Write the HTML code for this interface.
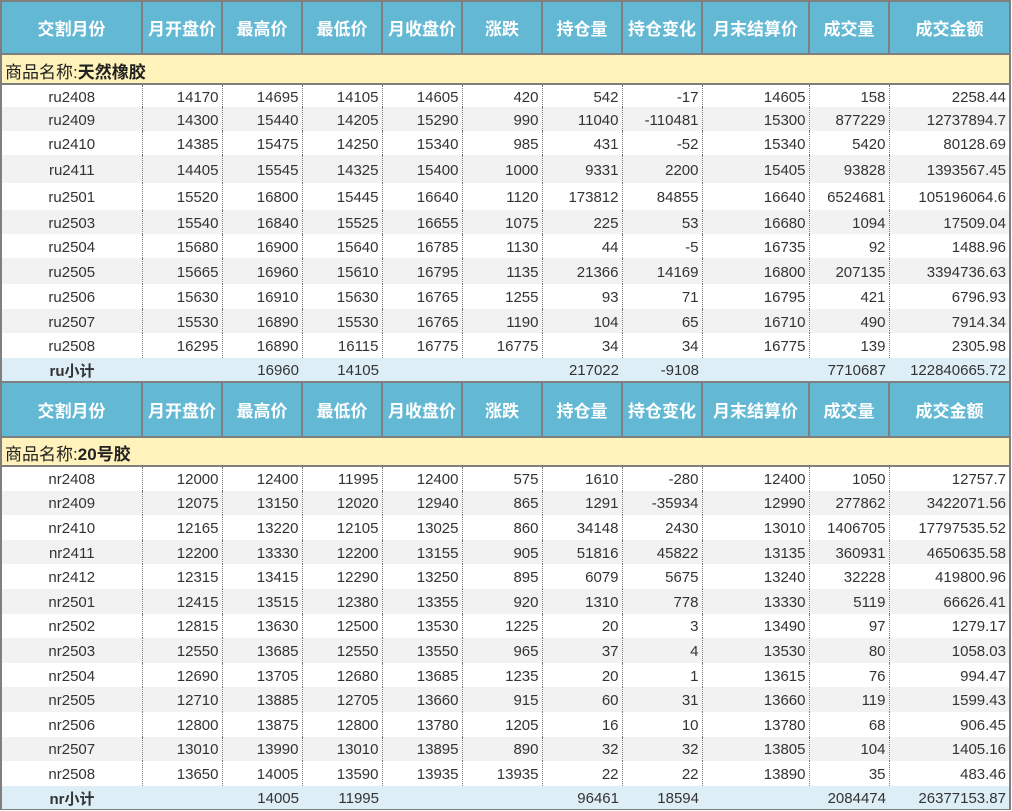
<!DOCTYPE html>
<html><head><meta charset="utf-8"><style>
*{margin:0;padding:0;box-sizing:border-box}
body{width:1012px;height:811px;background:#fff;overflow:hidden;font-family:"Liberation Sans","Noto Sans CJK SC",sans-serif;color:#333}
.wrap{position:absolute;left:0;top:0;width:1011px;height:810px;border:2px solid #7f7f7f;background:#fff}
table{border-collapse:collapse;table-layout:fixed;width:1007px;position:absolute;left:0}
td{font-size:15px;white-space:nowrap;overflow:hidden;text-align:right;padding-right:3px;padding-top:2px;border-left:1px dotted #777}
td:first-child{border-left:none;text-align:center;padding-right:0}
tr.h td{background:#63b8d3;color:#fff;font-weight:bold;font-size:17px;text-align:center;padding:0;border:2px solid #7f7f7f;border-top:none}
tr.h td:first-child{border-left:none}
tr.h td:last-child{border-right:none}
tr.n td{background:#fff2bb;text-align:left;padding-left:3px;font-size:17px;border:none;border-bottom:2px solid #7f7f7f;color:#222}
tr.s td{background:#f2f2f2}
tr.t td{background:#ddeef6;border-left:none}
tr.t td:first-child{font-weight:bold}
</style></head><body><div class="wrap">
<table style="top:0">
<colgroup><col style="width:140px"><col style="width:80px"><col style="width:80px"><col style="width:80px"><col style="width:80px"><col style="width:80px"><col style="width:80px"><col style="width:80px"><col style="width:107px"><col style="width:80px"><col style="width:120px"></colgroup>
<tr class="h" style="height:52px"><td>交割月份</td><td>月开盘价</td><td>最高价</td><td>最低价</td><td>月收盘价</td><td>涨跌</td><td>持仓量</td><td>持仓变化</td><td>月末结算价</td><td>成交量</td><td>成交金额</td></tr>
<tr class="n" style="height:30px"><td colspan="11">商品名称:<b>天然橡胶</b></td></tr>
<tr style="height:23px"><td>ru2408</td><td>14170</td><td>14695</td><td>14105</td><td>14605</td><td>420</td><td>542</td><td>-17</td><td>14605</td><td>158</td><td>2258.44</td></tr>
<tr class="s" style="height:24px"><td>ru2409</td><td>14300</td><td>15440</td><td>14205</td><td>15290</td><td>990</td><td>11040</td><td>-110481</td><td>15300</td><td>877229</td><td>12737894.7</td></tr>
<tr style="height:24px"><td>ru2410</td><td>14385</td><td>15475</td><td>14250</td><td>15340</td><td>985</td><td>431</td><td>-52</td><td>15340</td><td>5420</td><td>80128.69</td></tr>
<tr class="s" style="height:28px"><td>ru2411</td><td>14405</td><td>15545</td><td>14325</td><td>15400</td><td>1000</td><td>9331</td><td>2200</td><td>15405</td><td>93828</td><td>1393567.45</td></tr>
<tr style="height:27px"><td>ru2501</td><td>15520</td><td>16800</td><td>15445</td><td>16640</td><td>1120</td><td>173812</td><td>84855</td><td>16640</td><td>6524681</td><td>105196064.6</td></tr>
<tr class="s" style="height:24px"><td>ru2503</td><td>15540</td><td>16840</td><td>15525</td><td>16655</td><td>1075</td><td>225</td><td>53</td><td>16680</td><td>1094</td><td>17509.04</td></tr>
<tr style="height:24px"><td>ru2504</td><td>15680</td><td>16900</td><td>15640</td><td>16785</td><td>1130</td><td>44</td><td>-5</td><td>16735</td><td>92</td><td>1488.96</td></tr>
<tr class="s" style="height:26px"><td>ru2505</td><td>15665</td><td>16960</td><td>15610</td><td>16795</td><td>1135</td><td>21366</td><td>14169</td><td>16800</td><td>207135</td><td>3394736.63</td></tr>
<tr style="height:25px"><td>ru2506</td><td>15630</td><td>16910</td><td>15630</td><td>16765</td><td>1255</td><td>93</td><td>71</td><td>16795</td><td>421</td><td>6796.93</td></tr>
<tr class="s" style="height:24px"><td>ru2507</td><td>15530</td><td>16890</td><td>15530</td><td>16765</td><td>1190</td><td>104</td><td>65</td><td>16710</td><td>490</td><td>7914.34</td></tr>
<tr style="height:25px"><td>ru2508</td><td>16295</td><td>16890</td><td>16115</td><td>16775</td><td>16775</td><td>34</td><td>34</td><td>16775</td><td>139</td><td>2305.98</td></tr>
<tr class="t" style="height:23px"><td>ru小计</td><td></td><td>16960</td><td>14105</td><td></td><td></td><td>217022</td><td>-9108</td><td></td><td>7710687</td><td>122840665.72</td></tr>
<tr class="h" style="height:55px"><td style="border-top:2px solid #7f7f7f">交割月份</td><td style="border-top:2px solid #7f7f7f">月开盘价</td><td style="border-top:2px solid #7f7f7f">最高价</td><td style="border-top:2px solid #7f7f7f">最低价</td><td style="border-top:2px solid #7f7f7f">月收盘价</td><td style="border-top:2px solid #7f7f7f">涨跌</td><td style="border-top:2px solid #7f7f7f">持仓量</td><td style="border-top:2px solid #7f7f7f">持仓变化</td><td style="border-top:2px solid #7f7f7f">月末结算价</td><td style="border-top:2px solid #7f7f7f">成交量</td><td style="border-top:2px solid #7f7f7f">成交金额</td></tr>
<tr class="n" style="height:28px"><td colspan="11">商品名称:<b>20号胶</b></td></tr>
<tr style="height:24.6px"><td>nr2408</td><td>12000</td><td>12400</td><td>11995</td><td>12400</td><td>575</td><td>1610</td><td>-280</td><td>12400</td><td>1050</td><td>12757.7</td></tr>
<tr class="s" style="height:24.6px"><td>nr2409</td><td>12075</td><td>13150</td><td>12020</td><td>12940</td><td>865</td><td>1291</td><td>-35934</td><td>12990</td><td>277862</td><td>3422071.56</td></tr>
<tr style="height:24.6px"><td>nr2410</td><td>12165</td><td>13220</td><td>12105</td><td>13025</td><td>860</td><td>34148</td><td>2430</td><td>13010</td><td>1406705</td><td>17797535.52</td></tr>
<tr class="s" style="height:24.6px"><td>nr2411</td><td>12200</td><td>13330</td><td>12200</td><td>13155</td><td>905</td><td>51816</td><td>45822</td><td>13135</td><td>360931</td><td>4650635.58</td></tr>
<tr style="height:24.6px"><td>nr2412</td><td>12315</td><td>13415</td><td>12290</td><td>13250</td><td>895</td><td>6079</td><td>5675</td><td>13240</td><td>32228</td><td>419800.96</td></tr>
<tr class="s" style="height:24.6px"><td>nr2501</td><td>12415</td><td>13515</td><td>12380</td><td>13355</td><td>920</td><td>1310</td><td>778</td><td>13330</td><td>5119</td><td>66626.41</td></tr>
<tr style="height:24.6px"><td>nr2502</td><td>12815</td><td>13630</td><td>12500</td><td>13530</td><td>1225</td><td>20</td><td>3</td><td>13490</td><td>97</td><td>1279.17</td></tr>
<tr class="s" style="height:24.6px"><td>nr2503</td><td>12550</td><td>13685</td><td>12550</td><td>13550</td><td>965</td><td>37</td><td>4</td><td>13530</td><td>80</td><td>1058.03</td></tr>
<tr style="height:24.6px"><td>nr2504</td><td>12690</td><td>13705</td><td>12680</td><td>13685</td><td>1235</td><td>20</td><td>1</td><td>13615</td><td>76</td><td>994.47</td></tr>
<tr class="s" style="height:24.6px"><td>nr2505</td><td>12710</td><td>13885</td><td>12705</td><td>13660</td><td>915</td><td>60</td><td>31</td><td>13660</td><td>119</td><td>1599.43</td></tr>
<tr style="height:24.6px"><td>nr2506</td><td>12800</td><td>13875</td><td>12800</td><td>13780</td><td>1205</td><td>16</td><td>10</td><td>13780</td><td>68</td><td>906.45</td></tr>
<tr class="s" style="height:24.6px"><td>nr2507</td><td>13010</td><td>13990</td><td>13010</td><td>13895</td><td>890</td><td>32</td><td>32</td><td>13805</td><td>104</td><td>1405.16</td></tr>
<tr style="height:24.6px"><td>nr2508</td><td>13650</td><td>14005</td><td>13590</td><td>13935</td><td>13935</td><td>22</td><td>22</td><td>13890</td><td>35</td><td>483.46</td></tr>
<tr class="t" style="height:23px"><td>nr小计</td><td></td><td>14005</td><td>11995</td><td></td><td></td><td>96461</td><td>18594</td><td></td><td>2084474</td><td>26377153.87</td></tr>
</table></div></body></html>
